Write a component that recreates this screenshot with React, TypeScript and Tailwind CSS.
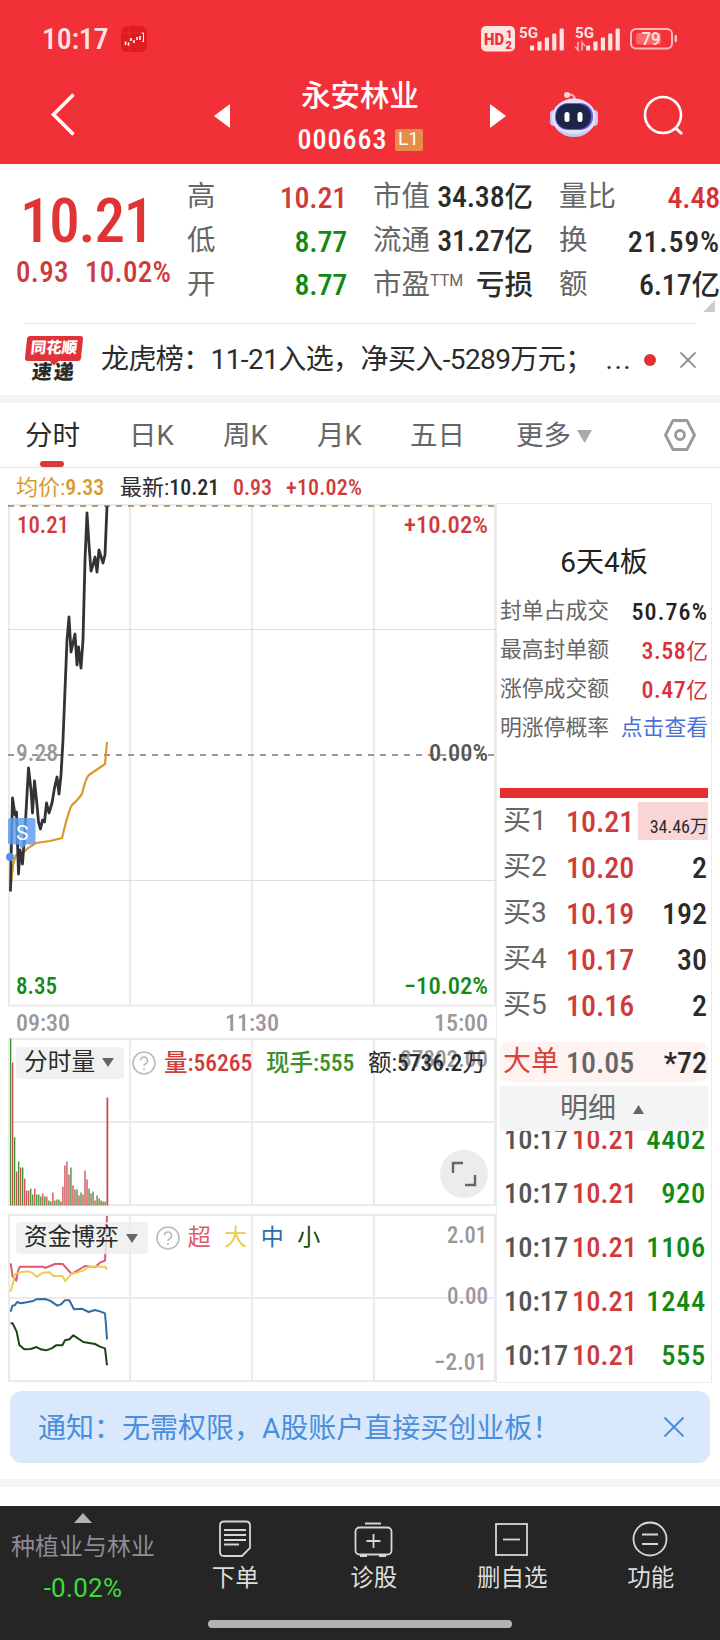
import React from "react";

const NUM = "font-['Roboto','Noto_Sans_CJK_SC',sans-serif] font-[490] font-stretch-condensed whitespace-nowrap";

const quotes = [
  [
    { label: "高", value: "10.21", color: "text-[#d03a3a]" },
    { label: "低", value: "8.77", color: "text-[#128a12]" },
    { label: "开", value: "8.77", color: "text-[#128a12]" },
  ],
  [
    { label: "市值", value: "34.38", unit: "亿", color: "text-[#2b2b2b]" },
    { label: "流通", value: "31.27", unit: "亿", color: "text-[#2b2b2b]" },
    { label: "市盈", sup: "TTM", unit: "亏损", color: "text-[#2b2b2b]" },
  ],
  [
    { label: "量比", value: "4.48", color: "text-[#d63434]" },
    { label: "换", value: "21.59%", color: "text-[#2b2b2b]" },
    { label: "额", value: "6.17", unit: "亿", color: "text-[#2b2b2b]" },
  ],
];

const limitStats = [
  { label: "封单占成交", value: "50.76%", color: "text-[#222222]" },
  { label: "最高封单额", value: "3.58", unit: "亿", color: "text-[#d8303c]" },
  { label: "涨停成交额", value: "0.47", unit: "亿", color: "text-[#d8303c]" },
  { label: "明涨停概率", unit: "点击查看", color: "text-[#4a6fd8]" },
];

const bids = [
  { label: "买1", price: "10.21", amount: "34.46万" },
  { label: "买2", price: "10.20", amount: "2" },
  { label: "买3", price: "10.19", amount: "192" },
  { label: "买4", price: "10.17", amount: "30" },
  { label: "买5", price: "10.16", amount: "2" },
];

const ticks = ["4402", "920", "1106", "1244", "555"];

// one entry per minute: bar height, g = down, r = up
const volumes =
  "167g 143r 68g 34r 44g 38r 38g 27r 15r 15r 17g 11g 17r 11g 11g 9g 12r 9g 9r 5g 4g 13r 5g 6r 6g 4g 19r 40r 44r 31r 38g 20r 16r 16g 10r 13g 11r 35r 26r 17g 12r 14g 5r 10g 7r 5g 4g 4r 108r"
    .split(" ")
    .map((v, i) => ({ x: 10 + i * 2.01, h: parseInt(v), up: v.endsWith("r") }));

const gridX = [9, 130, 252, 374, 495];

type LabelProps = {
  x: number;
  y: number;
  w: number;
  fill: string;
  end?: boolean;
  children: React.ReactNode;
};

function ChartLabel({ x, y, w, fill, end, children }: LabelProps) {
  return (
    <text
      x={x}
      y={y}
      fill={fill}
      textLength={w}
      lengthAdjust="spacingAndGlyphs"
      textAnchor={end ? "end" : "start"}
      className="font-['Roboto',sans-serif] text-[24px] font-[490] font-stretch-condensed"
    >
      {children}
    </text>
  );
}

function Signal({ weak }: { weak?: boolean }) {
  return (
    <svg width="48" height="26" viewBox="0 0 48 26" className="shrink-0 overflow-visible" fill="#ffe3e3">
      <text x="0" y="11.500" textLength="19" lengthAdjust="spacingAndGlyphs" className="font-['Roboto'] text-[14px] font-bold">
        5G
      </text>
      {[5, 9, 13, 17, 22].map((h, i) => (
        <rect key={h} x={11 + i * 7.4} y={24.5 - h} width="4.2" height={h} rx="1" />
      ))}
      {weak && (
        <path d="M3 16v8L0 20.500M7 24.500v-8l3 3.500" fill="none" stroke="#ff9fa2" strokeWidth="1.800" />
      )}
    </svg>
  );
}

function StatusBar() {
  return (
    <div className="flex h-[76px] items-center pl-[42px] pr-[42px] pt-[2px] text-[#ffe3e3]">
      <span className="w-[79px] font-['Roboto'] text-[30px] leading-none font-[490] tracking-[-0.300px] font-stretch-semi-condensed">
        10:17
      </span>
      <svg width="26" height="26" viewBox="0 0 26 26">
        <rect width="26" height="26" rx="6" fill="#e01c20" />
        <path d="M8 0v26M0 7h26" stroke="#ea3a3a" strokeWidth="0.600" />
        <path d="M4.500 15.500v3.500M7.500 16.500v3M10 12v3M13 14v3M16 11v3M19 10v4" stroke="#fff" strokeWidth="1.600" />
        <path d="M20.500 7H22.500v8.500h-1.500" stroke="#fff" fill="none" />
      </svg>
      <div className="ml-auto flex items-center">
        <svg width="34" height="26" viewBox="0 0 34 26">
          <rect width="34" height="25.500" rx="5" fill="#ffe3e3" />
          <text x="3" y="19" fill="#ee3038" textLength="20" lengthAdjust="spacingAndGlyphs" className="font-['Roboto'] text-[17px] font-black">
            HD
          </text>
          <text x="25" y="11.500" fill="#ee3038" className="font-['Roboto'] text-[11px] font-black">
            1
          </text>
          <text x="24.500" y="22.500" fill="#ee3038" className="font-['Roboto'] text-[11px] font-black">
            2
          </text>
        </svg>
        <div className="ml-1 flex gap-2">
          <Signal />
          <Signal weak />
        </div>
        <svg width="48" height="22" viewBox="0 0 48 22" className="ml-[7px]">
          <rect x="1" y="1" width="41" height="19.500" rx="5" fill="none" stroke="#ffb9bb" strokeWidth="2" />
          <rect x="6" y="5" width="25" height="11.500" rx="2" fill="#f9696d" />
          <rect x="44.500" y="7" width="2.500" height="7" rx="1" fill="#ffb9bb" />
          <text x="11.500" y="17" fill="#ffe3e3" textLength="19" lengthAdjust="spacingAndGlyphs" className="font-['Roboto'] text-[18px] font-medium">
            79
          </text>
        </svg>
      </div>
    </div>
  );
}

function Robot() {
  return (
    <svg width="50" height="46" viewBox="0 0 50 46">
      <path d="M18 4q8-2 8 6" fill="none" stroke="#f2b8cc" strokeWidth="2" />
      <circle cx="18" cy="4" r="3" fill="#fbd3dc" />
      <rect x="1" y="19" width="8" height="16" rx="4" fill="#c9c4f0" />
      <rect x="41" y="19" width="8" height="16" rx="4" fill="#c9c4f0" />
      <ellipse cx="25" cy="26.500" rx="22" ry="19" fill="#e6e2fb" />
      <path d="M6 36q19 14 38 0q-7 10-19 10T6 36" fill="#b9cdf6" />
      <rect x="6" y="12" width="38" height="27" rx="13" fill="#6a5ce0" />
      <rect x="7" y="13" width="35" height="25" rx="12" fill="#1c2547" />
      <rect x="15.500" y="21" width="5" height="10" rx="2.500" fill="#fff" />
      <rect x="28.500" y="21" width="5" height="10" rx="2.500" fill="#fff" />
    </svg>
  );
}

function Header() {
  return (
    <header className="h-[164px] bg-[#f23037] text-white">
      <StatusBar />
      <div className="flex h-[80px] items-center">
        <svg width="26" height="46" viewBox="0 0 26 46" className="ml-[50px] -mt-[3px]" fill="none" stroke="#fff" strokeWidth="3.600">
          <path d="M23.500 2.500 3.500 22.500l20 20" />
        </svg>
        <svg width="16" height="24" viewBox="0 0 16 24" className="ml-[138px]" fill="#fff">
          <path d="M16 0v24L0 12z" />
        </svg>
        <div className="flex w-[260px] flex-col items-center pt-[3px]">
          <h1 className="text-[29.500px] leading-[37px] font-medium">永安林业</h1>
          <div className="mt-[7px] flex items-center gap-[7px]">
            <span className={`${NUM} text-[28px] leading-[36px] tracking-[1px]`}>000663</span>
            <span className="flex h-[22px] w-[28px] items-center justify-center rounded-[2px] bg-[#e58d48] font-['Roboto'] text-[19px]">
              L1
            </span>
          </div>
        </div>
        <svg width="16" height="24" viewBox="0 0 16 24" fill="#fff">
          <path d="M0 0v24l16-12z" />
        </svg>
        <div className="ml-[43px] -mt-[4px]">
          <Robot />
        </div>
        <svg width="42" height="42" viewBox="0 0 42 42" className="ml-[44px]" fill="none" stroke="#fff" strokeWidth="2.600">
          <circle cx="20" cy="20" r="18" />
          <path d="m32 32.500 7 6.500" strokeWidth="3" />
        </svg>
      </div>
    </header>
  );
}

function Quote() {
  return (
    <section className="relative flex h-[159px] pt-[11px]">
      <div className="w-[187px]">
        <div className="h-[83px] pl-[20px] pt-[15px] font-['Roboto'] text-[61px] leading-[63px] font-[480] tracking-[-1.200px] font-stretch-condensed text-[#e03333]">
          10.21
        </div>
        <div className={`${NUM} flex pl-[16px] text-[29px] leading-[28px] tracking-[0.300px] text-[#cf3b3b]`}>
          <span className="w-[69px]">0.93</span>
          <span>10.02%</span>
        </div>
      </div>
      <div className="grid grid-cols-[160px_160px_161px] gap-x-[26px]">
        {quotes.map((col, i) => (
          <div key={i}>
            {col.map((q) => (
              <div key={q.label} className="flex h-[43.700px] items-center justify-between pt-px">
                <span className="flex pt-px text-[28.500px] text-[#666666]">
                  {q.label}
                  {q.sup && (
                    <sup className="top-0 pt-[7px] font-['Roboto'] text-[16px] leading-[20px]">{q.sup}</sup>
                  )}
                </span>
                <span className={`${NUM} text-[30px] ${q.color}`}>
                  {q.value && <span className={q.value.endsWith("%") ? "tracking-[0.800px]" : "tracking-[-0.200px]"}>{q.value}</span>}
                  {q.unit && <span className="text-[28.500px]">{q.unit}</span>}
                </span>
              </div>
            ))}
          </div>
        ))}
      </div>
      <svg width="12" height="12" className="absolute right-[5px] bottom-[11px]" fill="#cccccc">
        <path d="M12 0v12H0z" />
      </svg>
    </section>
  );
}

function News() {
  return (
    <div className="mx-6 flex h-[72px] items-center border-t border-[#e8e8e8]">
      <div className="ml-[2px] w-[56px] shrink-0 text-center font-black">
        <div className="relative -skew-x-6 rounded-[3px] bg-[#e03338] text-[15.500px] leading-[25px] text-white">
          同花顺
          <span className="absolute -bottom-[3px] left-[26px] size-[7px] rotate-45 bg-[#e03338]" />
        </div>
        <div className="-skew-x-6 text-[20px] leading-[23px] tracking-[2px] text-[#2b2b2b]">速递</div>
      </div>
      <p className="ml-[19px] w-[534px] shrink-0 pt-px text-[28px] tracking-[-0.600px] whitespace-nowrap text-[#2b2b2b]">
        龙虎榜：11-21入选，净买入-5289万元；<span className="ml-[13px] tracking-[1.500px]">...</span>
      </p>
      <span className="ml-[9px] size-3 shrink-0 rounded-full bg-[#e33030]" />
      <svg width="16" height="16" viewBox="0 0 16 16" className="ml-auto" stroke="#8a8a8a" strokeWidth="1.800">
        <path d="m0.500 0.500 15 15m0-15-15 15" />
      </svg>
    </div>
  );
}

function Tabs() {
  return (
    <nav className="flex h-[65px] items-center border-b border-[#e5e5e5] pt-[2px] pl-[25px] text-[27.500px] text-[#666666]">
      <div className="relative flex h-full w-[104px] items-center text-[#2b2b2b]">
        分时
        <span className="absolute bottom-0 left-[15px] h-[6px] w-6 rounded-full bg-[#d93a3a]" />
      </div>
      <span className="w-[94px]">日K</span>
      <span className="w-[94px]">周K</span>
      <span className="w-[93px]">月K</span>
      <span className="w-[106px]">五日</span>
      <span>更多</span>
      <svg width="15" height="13" className="ml-[6px]" fill="#aaaaaa">
        <path d="M0 0h15L7.500 13z" />
      </svg>
      <svg width="34" height="34" viewBox="0 0 34 34" className="mr-[23px] ml-auto -mt-[2px]" fill="none" stroke="#999999" strokeWidth="2.800" strokeLinejoin="round">
        <path d="M10 2.500h14L31.500 17 24 31.500H10L2.500 17z" />
        <circle cx="17" cy="17" r="4.500" />
      </svg>
    </nav>
  );
}

function Legend() {
  return (
    <div className={`${NUM} flex h-[36px] items-center pt-[2px] pl-[16px] text-[22px]`}>
      <span className="w-[104px] text-[#d69a2a]">
        <span className="font-normal">均价:</span>9.33
      </span>
      <span className="w-[113px] text-[#2b2b2b]">
        <span className="font-normal">最新:</span>10.21
      </span>
      <span className="w-[53px] text-[#cf3b3b]">0.93</span>
      <span className="tracking-[0.200px] text-[#cf3b3b]">+10.02%</span>
    </div>
  );
}

function PriceChart() {
  return (
    <svg width="496" height="503" viewBox="0 504 496 503" className="block" fill="none">
      <g stroke="#ebebeb" strokeWidth="2">
        {gridX.map((x) => (
          <path key={x} d={`M${x} 505v501`} />
        ))}
        <path d="M8 505h488M8 1005.500h488" />
      </g>
      <path d="M8 629.500h488M8 880.500h488" stroke="#dddddd" />
      <path d="M8 506h488" stroke="#b39b72" strokeWidth="2" strokeDasharray="6 6" />
      <path d="M8 755h488" stroke="#999999" strokeWidth="2" strokeDasharray="6 6" />
      <path
        d="M11 885 13 865 16 855 25 851 28 848 36 843 50 841 62 838 64 830Q70 806 73 804T82 794Q86 777 89 775T105 764L107 742"
        stroke="#d99a2b"
        strokeWidth="2.200"
      />
      <path
        d="M10.500 891.500 11 860 12.500 798 15 815 16.500 812 18.500 874 20 850 22.500 864 25 830 28.500 768 31 790 32.500 813 34.500 781 37 805 38.500 822 40.500 829 42.500 820 44.500 822 46.500 803 49 813 52 803 54.500 788 57 777 59 794 61 775 63 740 65 690 67 640 69 617 71 652 75 634 77 665 78.500 647 81 668 83 640 85 560 87 513 89 545 91 571 93 565 95 557 97 572 99 550 103 563 105 555 107 506"
        stroke="#333333"
        strokeWidth="2.800"
        strokeLinejoin="round"
      />
      <path d="M10 818h23q2.500 0 2.500 2.500V842q0 2.500-2.500 2.500h-7l-4 4.500-4-4.500h-8q-2 0-2-2V820q0-2 2-2z" fill="#5b9cef" fillOpacity="0.820" />
      <text x="16" y="840" fill="#fff" className="font-['Roboto'] text-[21px]">
        S
      </text>
      <circle cx="10" cy="857" r="4" fill="#4f92e6" />
      <ChartLabel x={17} y={533} w={52} fill="#cf3b3b">10.21</ChartLabel>
      <ChartLabel x={488} y={533} w={84} fill="#cf3b3b" end>+10.02%</ChartLabel>
      <ChartLabel x={16} y={761} w={42} fill="#999999">9.28</ChartLabel>
      <ChartLabel x={488} y={761} w={59} fill="#555555" end>0.00%</ChartLabel>
      <ChartLabel x={16} y={994} w={41} fill="#128a12">8.35</ChartLabel>
      <ChartLabel x={488} y={994} w={84} fill="#128a12" end>−10.02%</ChartLabel>
    </svg>
  );
}

function Help() {
  return (
    <svg width="24" height="24" viewBox="0 0 24 24" className="shrink-0" fill="none" stroke="#bbbbbb" strokeWidth="1.600">
      <circle cx="12" cy="12" r="11" />
      <path d="M8.500 9.500a3.500 3.500 0 1 1 5 3.200q-1.500.8-1.500 2.300" />
      <path d="M12 17v2" />
    </svg>
  );
}

function IndicatorPill({ children }: { children: React.ReactNode }) {
  return (
    <div className="flex h-[32px] shrink-0 items-center gap-[7px] rounded-[4px] bg-[#eeeeee]/80 pr-[10px] pl-[8px] text-[23.700px] text-[#2b2b2b]">
      <span>{children}</span>
      <svg width="12" height="9" fill="#666666">
        <path d="M0 0h12L6 9z" />
      </svg>
    </div>
  );
}

function VolumeChart() {
  return (
    <div className="relative h-[168px]">
      <svg width="496" height="168" viewBox="0 1038 496 168" className="block" fill="none">
        <g stroke="#ebebeb" strokeWidth="2">
          {gridX.map((x) => (
            <path key={x} d={`M${x} 1038v168`} />
          ))}
          <path d="M8 1039h488M8 1122h488M8 1205h488" />
        </g>
        {volumes.map((v, i) => (
          <rect
            key={i}
            x={v.x}
            y={1205.5 - v.h}
            width={i === 48 ? 1.8 : 1.3}
            height={v.h}
            fill={v.up ? "#cc4a4d" : "#3f8f2f"}
          />
        ))}
        <ChartLabel x={488} y={1067} w={88} fill="#999999" end>87802.00</ChartLabel>
      </svg>
      <div className="absolute top-[8px] left-[16px] flex items-center">
        <IndicatorPill>分时量</IndicatorPill>
        <div className="ml-[8px]">
          <Help />
        </div>
        <div className={`${NUM} ml-[8px] flex pt-px text-[23.500px] leading-[32px]`}>
          <span className="w-[102px] text-[#cf3b3b]">量:56265</span>
          <span className="w-[102px] text-[#3c8f2c]">现手:555</span>
          <span className="text-[#2b2b2b]"><span className="font-normal">额:</span>5736.2<span className="font-normal">万</span></span>
        </div>
      </div>
      <div className="absolute top-[112px] left-[440px] flex size-12 items-center justify-center rounded-full bg-[#ececec]">
        <svg width="26" height="26" viewBox="0 0 26 26" fill="none" stroke="#666666" strokeWidth="2.400">
          <path d="M2 12V2h10M24 14v10H14" />
        </svg>
      </div>
    </div>
  );
}

function FundChart() {
  return (
    <div className="relative mt-[8px] h-[169px]">
      <svg width="496" height="169" viewBox="0 1214 496 169" className="block" fill="none">
        <g stroke="#ebebeb" strokeWidth="2">
          {gridX.map((x) => (
            <path key={x} d={`M${x} 1214v168`} />
          ))}
          <path d="M8 1215h488M8 1298h488M8 1381h488" />
        </g>
        {/* points are in thirds of a pixel */}
        <g transform="translate(0 1020) scale(0.33333)" strokeWidth="6" strokeLinejoin="round">
          <path stroke="#de5a70" d="M32 730 38 770 49 782 54 752 60 740H130L135 744 150 738 165 732H188L215 762 235 750 255 738 285 742 300 728 315 722 318 670 321 588" />
          <path stroke="#edcb52" d="M32 815 40 785 45 762 60 757 85 754 97 758 110 770 130 758 150 757 160 768H187L196 783 215 760 230 758 250 752 265 740H315L321 748" />
          <path stroke="#2e6da4" d="M32 875 37 857 44 856 52 846 62 850 80 847 100 843 108 838 135 837 150 842 172 857 183 853 195 841H208L222 868 245 866 266 876 285 870 302 875 315 880 318 915 321 958" />
          <path stroke="#17470f" d="M32 910H38L50 935 58 975 73 988 92 987 110 981 122 988 138 991 155 985 168 976H187L195 961 208 958 220 946 250 966 285 972 300 980 315 985 321 1036" />
        </g>
        <ChartLabel x={487} y={1243} w={40} fill="#999999" end>2.01</ChartLabel>
        <ChartLabel x={488} y={1304} w={41} fill="#999999" end>0.00</ChartLabel>
        <ChartLabel x={487} y={1370} w={53} fill="#999999" end>−2.01</ChartLabel>
      </svg>
      <div className="absolute top-[8px] left-[16px] flex items-center">
        <IndicatorPill>资金博弈</IndicatorPill>
        <div className="ml-[8px]">
          <Help />
        </div>
        <div className="ml-[8px] flex gap-[13.500px] text-[23px] leading-[32px]">
          <span className="text-[#de5a70]">超</span>
          <span className="text-[#edcb52]">大</span>
          <span className="text-[#2e6da4]">中</span>
          <span className="text-[#17470f]">小</span>
        </div>
      </div>
    </div>
  );
}

function OrderBook() {
  return (
    <aside className="h-[880px] w-[216px] overflow-hidden border border-[#ebebeb] pr-[3px] pl-[3px]">
      <h2 className="pt-[38px] text-center text-[28px] leading-[42px] text-[#222222]">6天4板</h2>
      <div className="mt-[8px] mb-[40px]">
        {limitStats.map((s) => (
          <div key={s.label} className="flex h-[39px] items-center justify-between">
            <span className="text-[21.800px] text-[#666666]">{s.label}</span>
            <span className={`${NUM} ${s.color}`}>
              {s.value && (
                <span className={s.unit ? "text-[24px] tracking-[0.500px]" : "text-[24px] tracking-[1.100px]"}>{s.value}</span>
              )}
              {s.unit && <span className="text-[21.800px] font-normal">{s.unit}</span>}
            </span>
          </div>
        ))}
      </div>
      <div className="h-[10px] bg-[#e62e2e]" />
      {bids.map((b, i) => (
        <div key={b.label} className="flex h-[46px] items-center">
          <span className="w-[66px] pl-[3px] text-[28px] text-[#666666]">{b.label}</span>
          <span className={`${NUM} w-[72px] text-[30px] text-[#cf3b3b]`}>{b.price}</span>
          <span
            className={
              i === 0
                ? "flex h-[38px] flex-1 items-end justify-end bg-[#f9d5d5] font-['Roboto','Noto_Sans_CJK_SC',sans-serif] text-[18px] whitespace-nowrap text-[#2b2b2b] font-stretch-condensed"
                : `${NUM} flex-1 pr-px text-right text-[30px] text-[#2b2b2b]`
            }
          >
            {b.amount}
          </span>
        </div>
      ))}
      <div className="mt-[14px] flex h-[40px] items-center rounded-[8px] bg-[#fff3f2]">
        <span className="w-[66px] pl-[3px] text-[28px] text-[#dd3f3a]">大单</span>
        <span className={`${NUM} text-[30px] text-[#666666]`}>10.05</span>
        <span className={`${NUM} flex-1 pr-px text-right text-[30px] text-[#2b2b2b]`}>*72</span>
      </div>
      <div className="mt-[4px] flex h-[45px] items-center justify-center gap-[17px] bg-[#f4f4f4] pt-px text-[28px] text-[#666666]">
        明细
        <svg width="11" height="9" fill="#666666" className="mr-[4px]">
          <path d="M0 9h11L5.500 0z" />
        </svg>
      </div>
      <div className="h-[249px] overflow-hidden">
        <div className="-mt-[18px]">
          {ticks.map((t) => (
            <div key={t} className={`${NUM} flex h-[54px] items-center pr-[2px] pl-[4px] text-[28.500px]`}>
              <span className="w-[68px] text-[#555555]">10:17</span>
              <span className="text-[#cf3b3b]">10.21</span>
              <span className="ml-auto font-medium tracking-[0.700px] text-[#128a12]">{t}</span>
            </div>
          ))}
        </div>
      </div>
    </aside>
  );
}

function Notice() {
  return (
    <div className="mx-[10px] mt-[8px] flex h-[72px] items-center justify-between rounded-[12px] bg-[#dae8fb] pr-[26px] pl-[28px] text-[28px] text-[#4a8fdd]">
      <span className="pt-[3px]">通知：无需权限，A股账户直接买创业板！</span>
      <svg width="20" height="20" viewBox="0 0 20 20" stroke="#4a8fdd" strokeWidth="2">
        <path d="m0.500 0.500 19 19m0-19-19 19" />
      </svg>
    </div>
  );
}

const actions = [
  {
    label: "下单",
    icon: (
      <>
        <path d="M7 1.500h22q4 0 4 4V28l-8 8H7q-4 0-4-4V5.500q0-4 4-4z" />
        <path d="M7 10h22M7 15h22M7 20h22M7 24.500h15" />
      </>
    ),
  },
  {
    label: "诊股",
    icon: (
      <>
        <rect x="0.500" y="7.500" width="36" height="27" rx="4" />
        <path d="M10 3.500h16M18.500 14v14M11.500 21h14M5 36h7M24 36h7" />
      </>
    ),
  },
  {
    label: "删自选",
    icon: (
      <>
        <rect x="2" y="4" width="31" height="31" />
        <path d="M9 19.500h17" />
      </>
    ),
  },
  {
    label: "功能",
    icon: (
      <>
        <circle cx="18" cy="19" r="16.500" />
        <path d="M10 14.500h16M10 24h16" />
      </>
    ),
  },
];

function BottomBar() {
  return (
    <footer className="flex h-[134px] flex-col bg-[#252525]">
      <div className="flex h-[114px]">
        <div className="flex w-[166px] flex-col items-center pt-[7px]">
          <svg width="18" height="10" fill="#b3b3b3">
            <path d="M0 10h18L9 0z" />
          </svg>
          <span className="mt-[6px] text-[24px] leading-[36px] text-[#8e8a94]">种植业与林业</span>
          <span className="mt-[7px] font-['Roboto'] text-[26px] leading-[32px] tracking-[0.300px] text-[#3bdc3b]">
            -0.02%
          </span>
        </div>
        <div className="grid flex-1 grid-cols-4">
          {actions.map((a) => (
            <div key={a.label} className="flex flex-col items-center pt-[14px]">
              <svg width="37" height="38" viewBox="0 0 37 38" fill="none" stroke="#d6d6d6" strokeWidth="1.800" className="overflow-visible">
                {a.icon}
              </svg>
              <span className="mt-[4px] text-[23.500px] leading-[32px] text-[#dddddd]">{a.label}</span>
            </div>
          ))}
        </div>
      </div>
      <div className="mx-auto h-2 w-[304px] rounded-full bg-[#b2b2b2]" />
    </footer>
  );
}

export default function App() {
  return (
    <div className="h-[1640px] w-[720px] overflow-hidden bg-white font-['Roboto','Noto_Sans_CJK_SC',sans-serif]">
      <Header />
      <Quote />
      <News />
      <div className="h-2 bg-[#f4f4f4]" />
      <Tabs />
      <div className="flex">
        <div className="w-[496px]">
          <Legend />
          <PriceChart />
          <div className={`${NUM} flex h-[31px] items-center justify-between pr-[8px] pl-[16px] text-[24px] text-[#999999]`}>
            <span>09:30</span>
            <span>11:30</span>
            <span>15:00</span>
          </div>
          <VolumeChart />
          <FundChart />
        </div>
        <div className="pt-[35px]">
          <OrderBook />
        </div>
      </div>
      <Notice />
      <div className="mt-[16px] mb-[19px] h-2 bg-[#f4f4f4]" />
      <BottomBar />
    </div>
  );
}
